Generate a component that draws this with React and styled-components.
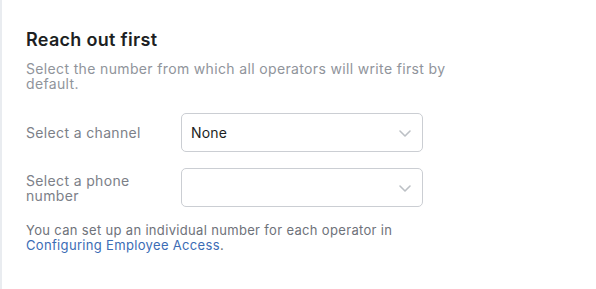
import React from "react";
import styled, { createGlobalStyle } from "styled-components";

const GlobalStyle = createGlobalStyle`
  html, body {
    margin: 0;
    padding: 0;
    background: #fff;
  }
  body {
    font-family: Inter, "Open Sans", sans-serif;
  }
`;

const Page = styled.div`
  width: 596px;
  height: 289px;
  box-sizing: border-box;
  border-left: 2px solid #e9ecf0;
  padding: 29px 0 0 24px;
`;

const Section = styled.div`
  width: 440px;
`;

const Title = styled.h2`
  margin: 0 0 10px;
  font-size: 18px;
  font-weight: 600;
  letter-spacing: 0.3px;
  color: #1d1f23;
  line-height: 22px;
`;

const Description = styled.p`
  margin: 0 0 22px;
  font-size: 14px;
  line-height: 15px;
  letter-spacing: 0.35px;
  color: #90949b;
`;

const Row = styled.div`
  display: flex;
  align-items: center;
  margin-bottom: 16px;
`;

const Label = styled.div`
  width: 155px;
  font-size: 14px;
  line-height: 15px;
  letter-spacing: 0.35px;
  color: #7c8088;
`;

const SelectBox = styled.div`
  width: 242px;
  height: 39px;
  box-sizing: border-box;
  border: 1px solid #cbced3;
  border-radius: 5px;
  display: flex;
  align-items: center;
  justify-content: space-between;
  padding: 0 10px 0 9px;
  font-size: 14px;
  letter-spacing: 0.2px;
  color: #1d1f23;
`;

const Chevron = styled.svg`
  width: 14px;
  height: 14px;
  color: #bcc0c5;
`;

const Note = styled.p`
  margin: 0;
  font-size: 13px;
  line-height: 15px;
  letter-spacing: 0.33px;
  color: #6e727a;
`;

const Link = styled.a`
  color: #3b6cb5;
  text-decoration: none;
`;

const Select = ({ value }) => (
  <SelectBox>
    <span>{value}</span>
    <Chevron viewBox="0 0 14 14" fill="none">
      <path d="M2 5l5 5 5-5" stroke="currentColor" strokeWidth="1.6" strokeLinecap="round" strokeLinejoin="round" />
    </Chevron>
  </SelectBox>
);

export default function App() {
  return (
    <>
      <GlobalStyle />
      <Page>
        <Section>
          <Title>Reach out first</Title>
          <Description>
            Select the number from which all operators will write first by default.
          </Description>
          <Row>
            <Label>Select a channel</Label>
            <Select value="None" />
          </Row>
          <Row>
            <Label>
              Select a phone
              <br />
              number
            </Label>
            <Select value="" />
          </Row>
          <Note>
            You can set up an individual number for each operator in
            <br />
            <Link href="#">Configuring Employee Access</Link>.
          </Note>
        </Section>
      </Page>
    </>
  );
}
